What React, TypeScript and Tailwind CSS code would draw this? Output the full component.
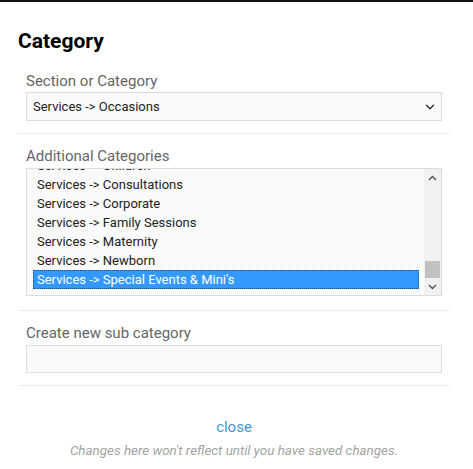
import { ChevronDown } from "lucide-react";

const items = [
  "Services -> Children",
  "Services -> Consultations",
  "Services -> Corporate",
  "Services -> Family Sessions",
  "Services -> Maternity",
  "Services -> Newborn",
  "Services -> Special Events & Mini's",
];

function Arrow({ up }: { up?: boolean }) {
  return (
    <svg width="9" height="6" viewBox="0 0 9 6" className="block">
      <path
        d={up ? "M1 5 L4.5 1.5 L8 5" : "M1 1 L4.5 4.5 L8 1"}
        fill="none"
        stroke="#505050"
        strokeWidth="1.4"
      />
    </svg>
  );
}

export default function App() {
  const selected = items.length - 1;

  return (
    <div className="min-h-[469px] w-[473px] bg-white font-['Roboto',sans-serif]">
      <div className="h-[2px] bg-[#111]" />
      <div className="mx-[18px] w-[432px] pt-[27px]">
        <h2 className="text-[21px] font-bold leading-[24px] text-black">Category</h2>

        <div className="mt-[18px] border-b border-[#eee] px-2 pb-3">
          <label className="block text-[15px] leading-[20px] text-[#666]">Section or Category</label>
          <div className="mt-px flex h-[29px] items-center justify-between border border-[#ddd] bg-[#fafafa] pl-[6px] pr-[4px] text-[13px] text-[#222]">
            <span>Services -&gt; Occasions</span>
            <ChevronDown className="h-[14px] w-[14px] text-[#333]" strokeWidth={2.5} />
          </div>
        </div>

        <div className="border-b border-[#eee] px-2 pb-[14px] pt-3">
          <label className="block text-[15px] leading-[20px] text-[#666]">Additional Categories</label>
          <div className="mt-[2px] flex h-[128px] border border-[#ddd] bg-[#fafafa]">
            <div className="flex-1 overflow-hidden pl-[6px] pr-[5px]">
              <div className="mt-[-13px]">
                {items.map((item, i) => (
                  <div
                    key={item}
                    className={
                      i === selected
                        ? "h-[19px] border border-dotted border-[#1a4f8a] bg-[#3399ff] pl-[3px] text-[13px] leading-[17px] text-white"
                        : "h-[19px] pl-1 text-[13px] leading-[19px] text-[#222]"
                    }
                  >
                    {item}
                  </div>
                ))}
              </div>
            </div>
            <div className="flex w-[17px] flex-col bg-[#f1f1f1]">
              <div className="flex h-[17px] items-center justify-center">
                <Arrow up />
              </div>
              <div className="flex-1" />
              <div className="mx-px h-[17px] bg-[#c1c1c1]" />
              <div className="flex h-[17px] items-center justify-center">
                <Arrow />
              </div>
            </div>
          </div>
        </div>

        <div className="border-b border-[#eee] px-2 pb-3 pt-3">
          <label className="block text-[15px] leading-[20px] text-[#666]">Create new sub category</label>
          <input className="mt-[2px] block h-[28px] w-full border border-[#ddd] bg-[#fafafa] outline-none" />
        </div>

        <div className="mt-[29px] text-center">
          <a className="text-[15px] leading-[20px] text-[#3a9ad9]">close</a>
          <p className="mt-[3px] text-[13.4px] italic leading-[18px] text-[#a3a3a3]">
            Changes here won't reflect until you have saved changes.
          </p>
        </div>
      </div>
    </div>
  );
}
